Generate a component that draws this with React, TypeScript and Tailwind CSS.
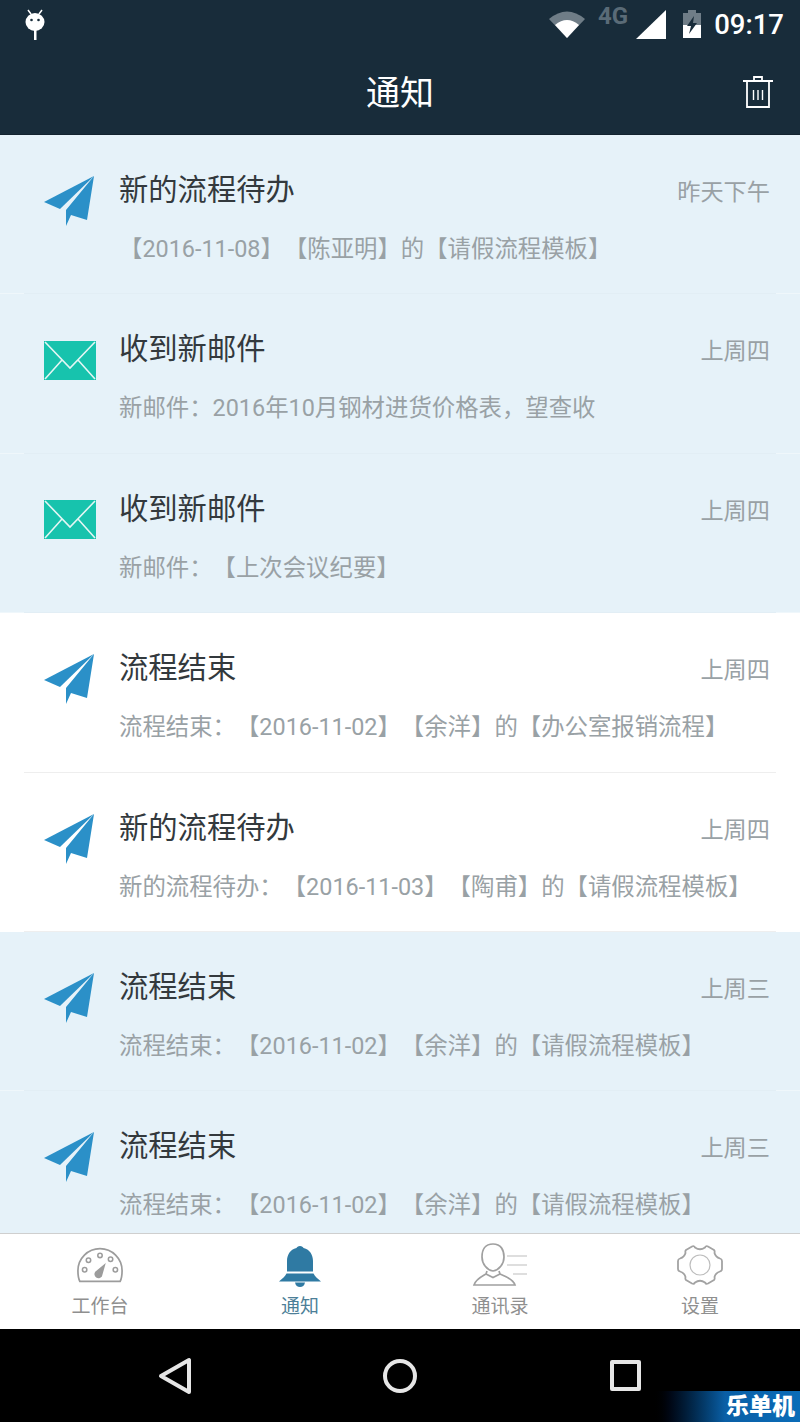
import React from "react";

const notices = [
    { icon: "plane", title: "新的流程待办", time: "昨天下午", desc: "【2016-11-08】【陈亚明】的【请假流程模板】", unread: true },
    { icon: "mail", title: "收到新邮件", time: "上周四", desc: "新邮件：2016年10月钢材进货价格表，望查收", unread: true },
    { icon: "mail", title: "收到新邮件", time: "上周四", desc: "新邮件：【上次会议纪要】", unread: true },
    { icon: "plane", title: "流程结束", time: "上周四", desc: "流程结束：【2016-11-02】【余洋】的【办公室报销流程】", unread: false },
    { icon: "plane", title: "新的流程待办", time: "上周四", desc: "新的流程待办：【2016-11-03】【陶甫】的【请假流程模板】", unread: false },
    { icon: "plane", title: "流程结束", time: "上周三", desc: "流程结束：【2016-11-02】【余洋】的【请假流程模板】", unread: true },
    { icon: "plane", title: "流程结束", time: "上周三", desc: "流程结束：【2016-11-02】【余洋】的【请假流程模板】", unread: true },
];

function PlaneIcon() {
    return (
        <svg width="52" height="52" viewBox="0 0 52 52" fill="#2b90c8">
            <path d="M0 27 L50 1 L16 34 Z" />
            <path d="M50 1 L43 45 L27 40 L22 51 L22 35 Z" />
        </svg>
    );
}

function MailIcon() {
    return (
        <svg width="52" height="39" viewBox="0 0 52 39">
            <rect width="52" height="39" fill="#17c3ad" />
            <path d="M1 1 L26 27 L51 1 M1 38 L18 19 M51 38 L34 19" fill="none" stroke="#e3f6f4" strokeWidth="1.6" />
        </svg>
    );
}

function GaugeIcon() {
    return (
        <svg width="48" height="40" viewBox="0 0 50 40" fill="none" stroke="#9c9c9c" strokeWidth="1.6">
            <path d="M4 37 Q2 33 2 26 A23 23 0 0 1 48 26 Q48 33 46 37 Z" strokeWidth="1.8" />
            <circle cx="9" cy="25" r="2.3" />
            <circle cx="13" cy="15" r="2.3" />
            <circle cx="25" cy="10" r="2.3" />
            <circle cx="36" cy="14" r="2.3" />
            <circle cx="41" cy="25" r="2.3" />
            <path d="M20 27 L31 18 L27 32 A4 4 0 0 1 20 27 Z" fill="#9c9c9c" stroke="none" />
        </svg>
    );
}

function BellIcon() {
    return (
        <svg className="mt-[3px]" width="44" height="42" viewBox="0 0 44 42" fill="#2f7aa3">
            <path d="M22 0 C24 0 25 1 25.500 2 C32 3.500 35 9 35 15 L35 25.500 L9 25.500 L9 15 C9 9 12 3.500 18.500 2 C19 1 20 0 22 0 Z" />
            <path d="M8.500 27.500 L35.500 27.500 C37 30.500 40 33 43 35.500 L1 35.500 C4 33 7 30.500 8.500 27.500 Z" />
            <path d="M17 36.500 L27 36.500 C26.500 39.500 24.500 41 22 41 C19.500 41 17.500 39.500 17 36.500 Z" />
        </svg>
    );
}

function ContactIcon() {
    return (
        <svg width="56" height="44" viewBox="0 0 56 44" fill="none" stroke="#a0a0a0" strokeWidth="1.7">
            <path d="M21 1 C13 1 10 7 10 14 C10 21 15 27 21 28 C27 27 32 21 32 14 C32 7 29 1 21 1 Z" />
            <path d="M15 28 L14 31 C9 34 4 36 2 42 L43 42 C41 36 33 33 28 31 L27 28 M14 31 L21 34.500 L28 31" />
            <path d="M35 13 L55 13 M35 22 L55 22 M41 31 L55 31" stroke="#bdbdbd" strokeWidth="1.200" />
        </svg>
    );
}

function GearIcon() {
    return (
        <svg width="46" height="42" viewBox="0 0 46 42" fill="none" stroke="#a3a3a3" strokeWidth="1.8" strokeLinejoin="round">
            <path d="M15 2.500 Q17 1.500 18 3.500 Q23 7 28 3.500 Q29 1.500 31 2.500 L37 6 Q38 7 37.500 9 Q38.500 13 43 14.500 Q45 15 45 17 L45 25 Q45 27 43 27.500 Q38.500 29 37.500 33 Q38 35 37 36 L31 39.500 Q29 40.500 28 38.500 Q23 35 18 38.500 Q17 40.500 15 39.500 L9 36 Q8 35 8.500 33 Q7.500 29 3 27.500 Q1 27 1 25 L1 17 Q1 15 3 14.500 Q7.500 13 8.500 9 Q8 7 9 6 Z" />
            <circle cx="23" cy="21" r="10" stroke="#bdbdbd" strokeWidth="1.200" />
        </svg>
    );
}

function NoticeRow({ notice, last }: { notice: (typeof notices)[number]; last: boolean }) {
    return (
        <div className={`relative flex h-[159.4px] shrink-0 pl-[44px] pr-[30px] ${notice.unread ? "bg-[#e6f2f9]" : "bg-white"}`}>
            <div className="mt-[40px] flex h-[52px] w-[52px] shrink-0 items-center justify-center">
                {notice.icon === "plane" ? <PlaneIcon /> : <MailIcon />}
            </div>
            <div className="ml-[23px] min-w-0 flex-1 pt-[35px]">
                <div className="flex items-center justify-between">
                    <span className="text-[29.3px] leading-[40px] text-[#33393d]">{notice.title}</span>
                    <span className="mt-[4px] text-[23.2px] leading-[32px] text-[#99a1a5]">{notice.time}</span>
                </div>
                <div className="mt-[23px] whitespace-nowrap text-[23.4px] leading-[32px] text-[#99a1a5]">{notice.desc}</div>
            </div>
            {!last && (
                <div className={`absolute inset-x-0 bottom-0 h-px ${notice.unread ? "bg-[#eff7fb]" : "bg-white"}`}>
                    <div className={`mx-[24px] h-px ${notice.unread ? "bg-[#e2eef5]" : "bg-[#eeeeee]"}`} />
                </div>
            )}
        </div>
    );
}

function TabItem({ label, active, children }: { label: string; active?: boolean; children: React.ReactNode }) {
    return (
        <div className="flex flex-1 flex-col items-center pt-[9px]">
            <div className="flex h-[44px] items-center justify-center">{children}</div>
            <span className={`mt-[7px] text-[19px] leading-[26px] ${active ? "text-[#4d7f98]" : "text-[#8f8f8f]"}`}>{label}</span>
        </div>
    );
}

export default function App() {
    return (
        <div className="relative flex h-[1422px] w-[800px] flex-col overflow-hidden bg-black font-['Roboto','Noto_Sans_CJK_SC',sans-serif] [text-spacing-trim:space-all]">
            {/* Status bar */}
            <div className="flex h-[54px] shrink-0 items-start justify-between bg-[#182c3a] pl-[24px] pr-[16px]">
                <svg className="mt-[9px]" width="22" height="32" viewBox="0 0 22 32" fill="#fff">
                    <path d="M4 1 L7 5 M18 1 L15 5" stroke="#fff" strokeWidth="1.500" />
                    <ellipse cx="11" cy="13" rx="9.500" ry="9" />
                    <circle cx="7.500" cy="11" r="1.300" fill="#182c3a" />
                    <circle cx="14.500" cy="11" r="1.300" fill="#182c3a" />
                    <rect x="10" y="21" width="2.500" height="10" />
                </svg>
                <div className="flex items-start">
                    <svg className="mt-[10px]" width="36" height="29" viewBox="0 0 36 29">
                        <path d="M18 28 L0 9 Q18 -6 36 9 Z" fill="#6f7d87" />
                        <path d="M18 28 L6 15 Q18 5 30 15 Z" fill="#fff" />
                    </svg>
                    <span className="ml-[13px] mt-[2px] text-[24px] font-bold leading-[28px] text-[#5a6b77]">4G</span>
                    <svg className="ml-[8px] mt-[10px]" width="30" height="29" viewBox="0 0 30 29">
                        <path d="M30 0 L30 29 L0 29 Z" fill="#fff" />
                    </svg>
                    <svg className="ml-[16px] mt-[10px]" width="20" height="29" viewBox="0 0 20 29">
                        <path d="M6 0 H14 V3 H19 V28 H1 V3 H6 Z" fill="#6f7d87" />
                        <path d="M1 15 H19 V28 H1 Z" fill="#fff" />
                        <path d="M12 6 L5 16 H9 L7 24 L15 13 H11 Z" fill="#182c3a" />
                    </svg>
                    <span className="ml-[12px] mt-[8px] text-[27.5px] font-medium leading-[34px] text-white">09:17</span>
                </div>
            </div>

            {/* Title bar */}
            <div className="relative flex h-[81px] shrink-0 items-center justify-center border-b border-[#13232f] bg-[#182c3a] pb-[3px]">
                <span className="text-[34px] leading-[44px] text-white">通知</span>
                <svg className="absolute right-[26px] top-[21px]" width="32" height="34" viewBox="0 0 32 34" fill="none" stroke="#fff" strokeWidth="1.800">
                    <path d="M1 6 H31 M12 6 V2 H20 V6 M5 6 V32 H27 V6" />
                    <path d="M11.500 15 V25 M16 15 V25 M20.500 15 V25" strokeWidth="1.400" />
                </svg>
            </div>

            {/* Notice list */}
            <div className="flex h-[1098px] shrink-0 flex-col overflow-hidden bg-white">
                {notices.map((notice, i) => (
                    <NoticeRow key={i} notice={notice} last={i === notices.length - 1} />
                ))}
            </div>

            {/* Tab bar */}
            <div className="flex h-[96px] shrink-0 border-t border-[#cfcfcf] bg-white">
                <TabItem label="工作台"><GaugeIcon /></TabItem>
                <TabItem label="通知" active><BellIcon /></TabItem>
                <TabItem label="通讯录"><ContactIcon /></TabItem>
                <TabItem label="设置"><GearIcon /></TabItem>
            </div>

            {/* Android nav */}
            <div className="relative flex flex-1 items-center bg-black">
                <svg className="ml-[158px]" width="34" height="38" viewBox="0 0 34 38" fill="none" stroke="#e6e6e6" strokeWidth="4" strokeLinejoin="round">
                    <path d="M3 19 L31 3 V35 Z" />
                </svg>
                <div className="ml-[191px] h-[34px] w-[34px] rounded-full border-4 border-[#e6e6e6]" />
                <div className="ml-[193px] h-[31px] w-[31px] rounded-[2px] border-4 border-[#e6e6e6]" />
            </div>

            {/* Watermark */}
            <div className="absolute bottom-0 right-0 flex h-[31px] w-[150px] items-center justify-end bg-gradient-to-r from-black via-[#0a5fa6] to-[#0a6cb8] pr-[5px]">
                <span className="text-[23px] font-black leading-[28px] text-white">乐单机</span>
            </div>
        </div>
    );
}
